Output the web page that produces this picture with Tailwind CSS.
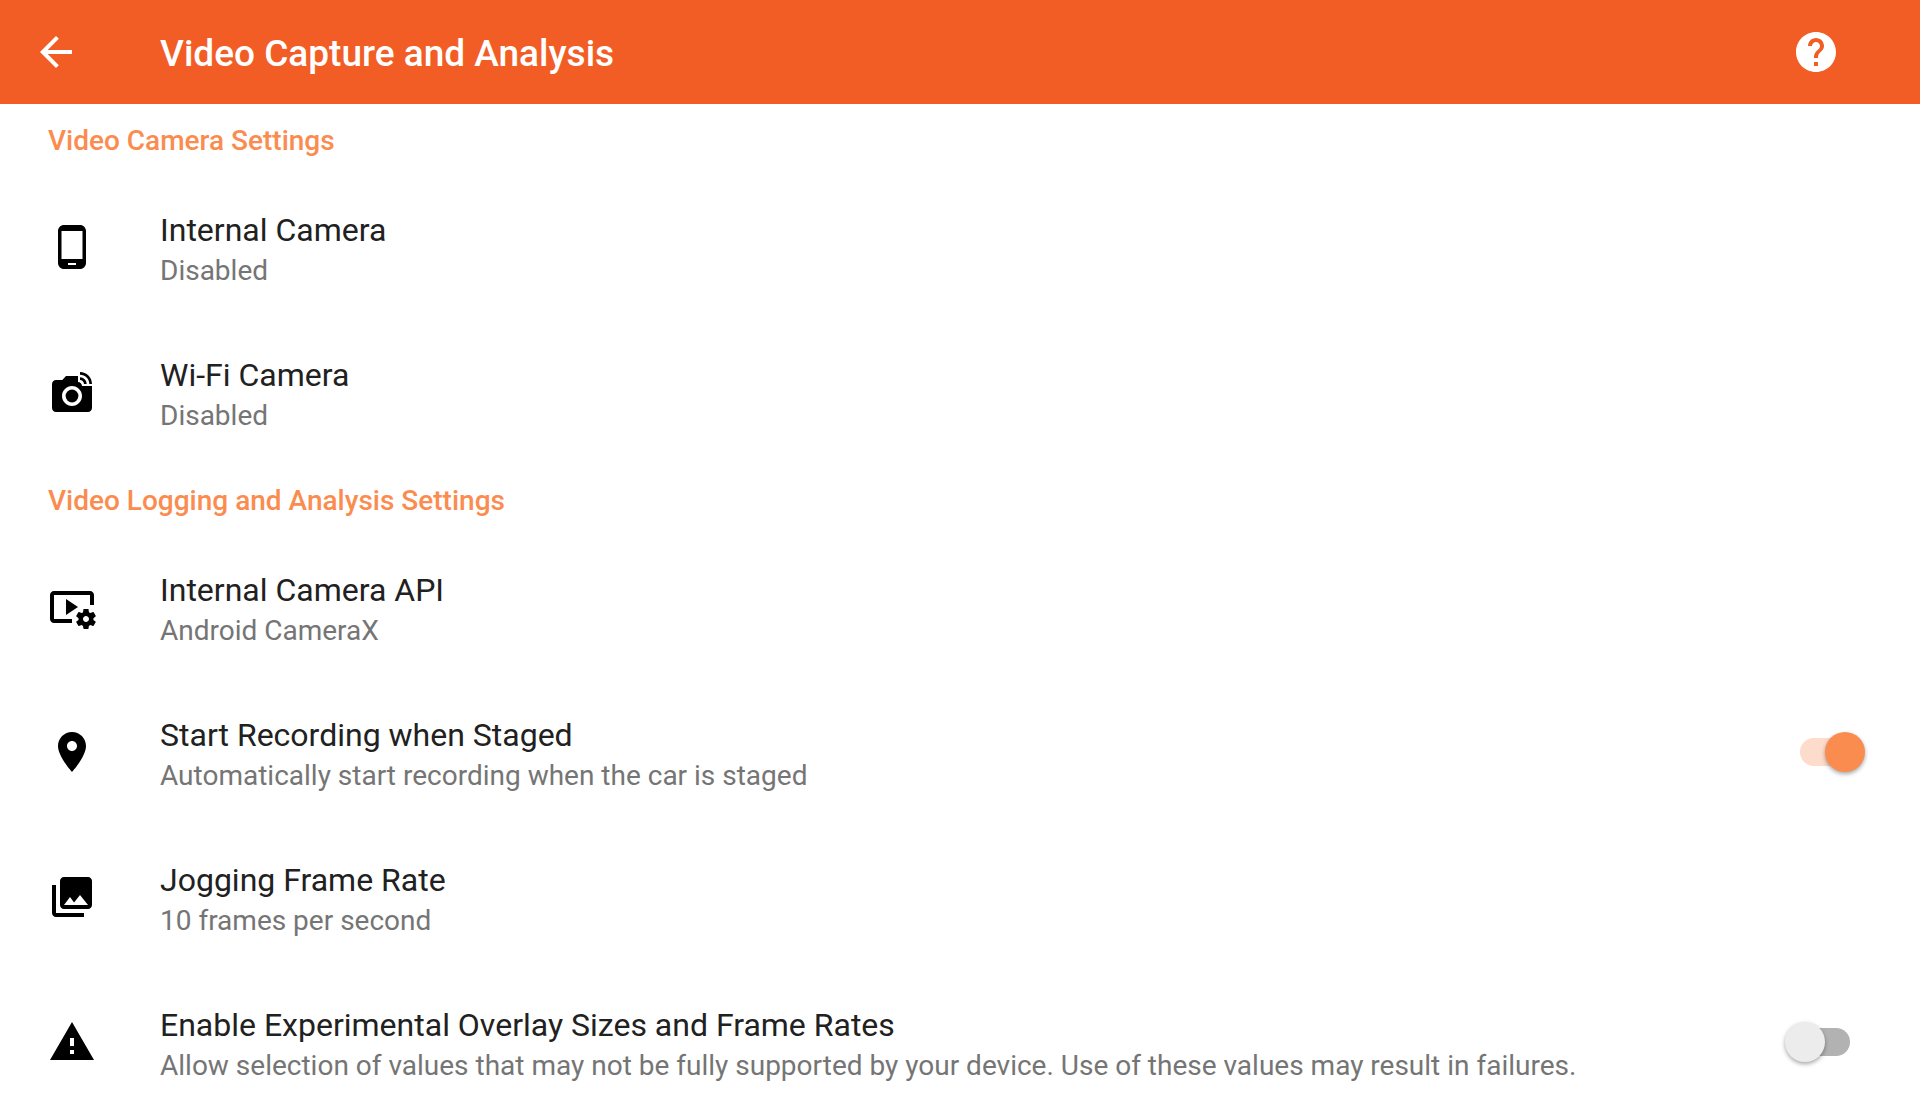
<!DOCTYPE html>
<html lang="en">
<head>
<meta charset="utf-8">
<meta name="viewport" content="width=device-width, initial-scale=1">
<title>Video Capture and Analysis</title>
<script src="https://cdn.jsdelivr.net/npm/@tailwindcss/browser@4"></script>
</head>
<body class="min-h-screen bg-white font-['Roboto',sans-serif] text-[#212121]">
<header class="flex h-[104px] items-center bg-[#f25d25] pr-20 pl-8 text-white">
  <button type="button" aria-label="Back" class="mr-20 shrink-0">
    <svg class="size-12" viewBox="0 0 24 24" fill="currentColor"><path d="M20 11H7.83l5.59-5.59L12 4l-8 8 8 8 1.41-1.41L7.83 13H20v-2z"/></svg>
  </button>
  <h1 class="grow pt-1 text-[37px] leading-10 font-medium">Video Capture and Analysis</h1>
  <button type="button" aria-label="Help" class="shrink-0">
    <svg class="size-12" viewBox="0 0 24 24" fill="currentColor"><path d="M12 2C6.48 2 2 6.48 2 12s4.48 10 10 10 10-4.48 10-10S17.52 2 12 2zm1 17h-2v-2h2v2zm2.07-7.75l-.9.92C13.45 12.9 13 13.5 13 15h-2v-.5c0-1.1.45-2.1 1.17-2.83l1.24-1.26c.37-.36.59-.86.59-1.41 0-1.1-.9-2-2-2s-2 .9-2 2H8c0-2.21 1.79-4 4-4s4 1.79 4 4c0 .88-.36 1.68-.93 2.25z"/></svg>
  </button>
</header>
<main>
  <section>
    <h2 class="flex h-[70px] items-center px-12 pt-1 text-[28px] leading-8 font-medium text-[#fb8c50]">Video Camera Settings</h2>
    <ul>
      <li>
        <button type="button" class="flex h-[145px] w-full items-center gap-16 px-12 text-left">
          <svg class="size-12 shrink-0 text-black" viewBox="0 0 24 24" fill="currentColor"><path d="M16 1H8C6.34 1 5 2.34 5 4v16c0 1.66 1.34 3 3 3h8c1.66 0 3-1.34 3-3V4c0-1.66-1.34-3-3-3zm-2 20h-4v-1h4v1zm3.25-3H6.75V4h10.5v14z"/></svg>
          <span class="grow pt-2">
            <span class="block text-[32px] leading-10">Internal Camera</span>
            <span class="block text-[28px] leading-[42px] text-[#757575]">Disabled</span>
          </span>
        </button>
      </li>
      <li>
        <button type="button" class="flex h-[145px] w-full items-center gap-16 px-12 text-left">
          <svg class="size-12 shrink-0 text-black" viewBox="0 0 24 24" fill="currentColor"><circle cx="12" cy="14" r="3.2"/><path d="M16 3.33c2.58 0 4.67 2.09 4.67 4.67H22c0-3.31-2.69-6-6-6v1.33M16 6c1.11 0 2 .89 2 2h1.33c0-1.84-1.49-3.33-3.33-3.33V6"/><path d="M17 9c0-1.11-.89-2-2-2V4H9L7.17 6H4c-1.1 0-2 .9-2 2v12c0 1.1.9 2 2 2h16c1.1 0 2-.9 2-2V9h-5zm-5 10c-2.76 0-5-2.24-5-5s2.24-5 5-5 5 2.24 5 5-2.24 5-5 5z"/></svg>
          <span class="grow pt-2">
            <span class="block text-[32px] leading-10">Wi-Fi Camera</span>
            <span class="block text-[28px] leading-[42px] text-[#757575]">Disabled</span>
          </span>
        </button>
      </li>
    </ul>
  </section>
  <section>
    <h2 class="flex h-[70px] items-center px-12 pt-1 text-[28px] leading-8 font-medium text-[#fb8c50]">Video Logging and Analysis Settings</h2>
    <ul>
      <li>
        <button type="button" class="flex h-[145px] w-full items-center gap-16 px-12 text-left">
          <svg class="size-12 shrink-0 text-black" viewBox="0 0 24 24" fill="currentColor"><path d="M3 6h18v5h2V6c0-1.1-.9-2-2-2H3c-1.1 0-2 .9-2 2v12c0 1.1.9 2 2 2h9v-2H3V6z"/><path d="M15 12 9 8v8z"/><path d="M22.71 18.43c.03-.29.04-.58.01-.86l1.07-.85c.1-.08.12-.21.06-.32l-1.03-1.79c-.06-.11-.19-.15-.31-.11l-1.28.5c-.23-.17-.48-.31-.75-.42l-.2-1.36c-.02-.12-.12-.21-.25-.21h-2.07c-.12 0-.23.09-.25.21l-.2 1.36c-.26.11-.51.26-.74.42l-1.28-.5c-.12-.05-.25 0-.31.11l-1.03 1.79c-.06.11-.04.24.06.32l1.07.86c-.03.29-.04.58-.01.86l-1.07.85c-.1.08-.12.21-.06.32l1.03 1.79c.06.11.19.15.31.11l1.27-.5c.23.17.48.31.75.42l.2 1.36c.02.12.12.21.25.21h2.06c.12 0 .23-.09.25-.21l.2-1.36c.26-.11.51-.26.74-.42l1.28.5c.12.05.25 0 .31-.11l1.03-1.79c.06-.11.04-.24-.06-.32l-1.08-.85zM19 19.5c-.83 0-1.5-.67-1.5-1.5s.67-1.5 1.5-1.5 1.5.67 1.5 1.5-.67 1.5-1.5 1.5z"/></svg>
          <span class="grow pt-2">
            <span class="block text-[32px] leading-10">Internal Camera API</span>
            <span class="block text-[28px] leading-[42px] text-[#757575]">Android CameraX</span>
          </span>
        </button>
      </li>
      <li>
        <label class="flex h-[145px] w-full items-center gap-16 pr-[55px] pl-12">
          <svg class="size-12 shrink-0 text-black" viewBox="0 0 24 24" fill="currentColor"><path d="M12 2C8.13 2 5 5.13 5 9c0 5.25 7 13 7 13s7-7.75 7-13c0-3.87-3.13-7-7-7zm0 9.5c-1.38 0-2.5-1.12-2.5-2.5s1.12-2.5 2.5-2.5 2.5 1.12 2.5 2.5-1.12 2.5-2.5 2.5z"/></svg>
          <span class="grow pt-2">
            <span class="block text-[32px] leading-10">Start Recording when Staged</span>
            <span class="block text-[28px] leading-[42px] text-[#757575]">Automatically start recording when the car is staged</span>
          </span>
          <input type="checkbox" role="switch" checked class="relative h-10 w-20 shrink-0 appearance-none before:absolute before:top-1.5 before:left-[15px] before:h-7 before:w-[50px] before:rounded-full before:bg-[#b2b2b2] after:absolute after:top-0 after:left-0 after:size-10 after:rounded-full after:bg-[#ececec] after:shadow-[0_2px_4px_rgba(0,0,0,0.35)] checked:before:bg-[#fedccb] checked:after:left-10 checked:after:bg-[#fb8c50]">
        </label>
      </li>
      <li>
        <button type="button" class="flex h-[145px] w-full items-center gap-16 px-12 text-left">
          <svg class="size-12 shrink-0 text-black" viewBox="0 0 24 24" fill="currentColor"><path d="M22 16V4c0-1.100-.9-2-2-2H8c-1.100 0-2 .9-2 2v12c0 1.100.9 2 2 2h12c1.100 0 2-.9 2-2zm-11-4l2.030 2.710L16 11l4 5H8l3-4zM2 6v14c0 1.100.9 2 2 2h14v-2H4V6H2z"/></svg>
          <span class="grow pt-2">
            <span class="block text-[32px] leading-10">Jogging Frame Rate</span>
            <span class="block text-[28px] leading-[42px] text-[#757575]">10 frames per second</span>
          </span>
        </button>
      </li>
      <li>
        <label class="flex h-[145px] w-full items-center gap-16 pr-[55px] pl-12">
          <svg class="size-12 shrink-0 text-black" viewBox="0 0 24 24" fill="currentColor"><path d="M1 21h22L12 2 1 21zm12-3h-2v-2h2v2zm0-4h-2v-4h2v4z"/></svg>
          <span class="grow pt-2">
            <span class="block text-[32px] leading-10">Enable Experimental Overlay Sizes and Frame Rates</span>
            <span class="block text-[28px] leading-[42px] text-[#757575]">Allow selection of values that may not be fully supported by your device. Use of these values may result in failures.</span>
          </span>
          <input type="checkbox" role="switch" class="relative h-10 w-20 shrink-0 appearance-none before:absolute before:top-1.5 before:left-[15px] before:h-7 before:w-[50px] before:rounded-full before:bg-[#b2b2b2] after:absolute after:top-0 after:left-0 after:size-10 after:rounded-full after:bg-[#ececec] after:shadow-[0_2px_4px_rgba(0,0,0,0.35)] checked:before:bg-[#fedccb] checked:after:left-10 checked:after:bg-[#fb8c50]">
        </label>
      </li>
    </ul>
  </section>
</main>
</body>
</html>
